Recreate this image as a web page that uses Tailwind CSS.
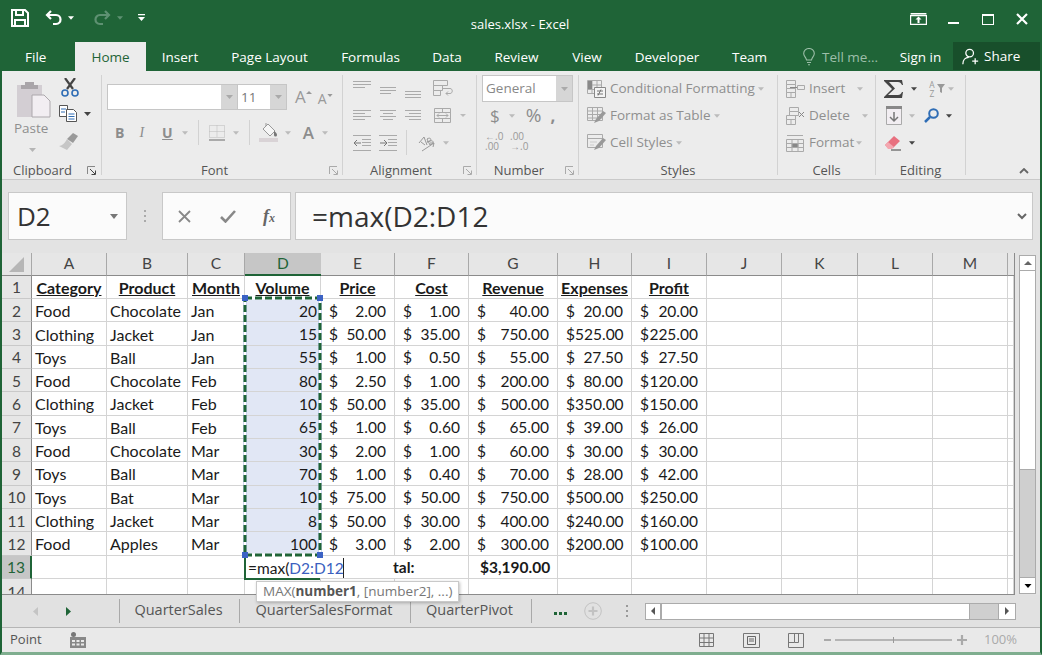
<!DOCTYPE html>
<html lang="en">
<head>
    <meta charset="UTF-8">
    <title>sales.xlsx - Excel</title>
    <script src="https://cdn.jsdelivr.net/npm/@tailwindcss/browser@4"></script>
</head>
<body class="bg-white">

<!-- shared caret -->
<svg class="hidden"><symbol id="caret" viewBox="0 0 7 4"><path d="M0 0h7L3.5 4z" fill="currentColor"/></symbol></svg>

<div class="w-[1042px] h-[655px] flex flex-col overflow-hidden border-x-2 border-x-[#1f6437] border-b-[3px] border-b-[#7fae8f] font-['Open_Sans',sans-serif] text-[13.5px] relative">

    <!-- Title bar -->
    <div class="h-[43px] bg-[#1f6437] text-white grid grid-cols-[1fr_auto_1fr] items-center shrink-0">
        <div class="flex items-center pl-[9px] pb-[7px]">
            <svg width="18" height="18" viewBox="0 0 18 18" fill="none" stroke="#fff" stroke-width="2"><path d="M1 1h13l3 3v13H1z"/><path d="M5 1v5h7V1M4 17v-6h10v6"/></svg>
            <svg class="ml-[16px]" width="18" height="16" viewBox="0 0 18 16" fill="none" stroke="#fff" stroke-width="2.2"><path d="M6 1 2 5l4 4"/><path d="M2 5h9c6 0 6 9 0 9H8"/></svg>
            <svg class="ml-[5px] text-white" width="6" height="4"><use href="#caret"/></svg>
            <svg class="ml-[19px]" width="18" height="16" viewBox="0 0 18 16" fill="none" stroke="#5e9172" stroke-width="2.2"><path d="m12 1 4 4-4 4"/><path d="M16 5H7c-6 0-6 9 0 9h3"/></svg>
            <svg class="ml-[6px] text-[#5e9172]" width="6" height="4"><use href="#caret"/></svg>
            <svg class="ml-[15px]" width="7" height="8" viewBox="0 0 7 8" fill="#fff"><path d="M0 0h7v1.300H0zM0 3h7L3.500 7z"/></svg>
        </div>
        <div class="text-[13px] -translate-x-[1px] translate-y-[3px] font-['Open_Sans',sans-serif]">sales.xlsx - Excel</div>
        <div class="flex items-center justify-end pr-[12px] pb-[5px]">
            <svg width="17" height="12" viewBox="0 0 17 12" fill="none" stroke="#fff" stroke-width="1.200"><path d="M.6 2.600h15.800v8.800H.6z"/><path d="M.6.600h15.800" stroke-width="2"/><path d="M8.500 10V6" stroke-width="2"/><path d="M5.500 6.500h6l-3-3z" fill="#fff" stroke="none"/></svg>
            <div class="ml-[21px] w-[11px] h-[2px] bg-white mt-[8px]"></div>
            <div class="ml-[23px] w-[12px] h-[11px] border border-white border-t-[2px]"></div>
            <svg class="ml-[22px]" width="12" height="12" viewBox="0 0 12 12" stroke="#fff" stroke-width="2.200"><path d="m1 1 10 10M11 1 1 11"/></svg>
        </div>
    </div>

    <!-- Ribbon tabs -->
    <div class="h-[28px] bg-[#1f6437] text-white flex items-stretch shrink-0">
        <div class="w-[73px] pl-[23px] leading-[29px]">File</div>
        <div class="w-[71px] -mt-[1px] text-center bg-[#ececec] text-[#1f6437] leading-[30px]">Home</div>
        <div class="w-[68px] text-center leading-[29px]">Insert</div>
        <div class="w-[111px] text-center leading-[29px]">Page Layout</div>
        <div class="w-[91px] text-center leading-[29px]">Formulas</div>
        <div class="w-[62px] text-center leading-[29px]">Data</div>
        <div class="w-[77px] text-center leading-[29px]">Review</div>
        <div class="w-[64px] text-center leading-[29px]">View</div>
        <div class="w-[96px] text-center leading-[29px]">Developer</div>
        <div class="w-[69px] text-center leading-[29px]">Team</div>
        <div class="ml-[19px] w-[81px] flex items-center text-[#9dbfa9]">
            <svg width="12" height="18" viewBox="0 0 12 18" fill="none" stroke="#9dbfa9" stroke-width="1.100"><path d="M3.500 12C3 9 .7 8.500.7 5.500a5.300 5 0 0 1 10.600 0C11.300 8.500 9 9 8.500 12zM4 14.500h4M5 16.800h2"/></svg>
            <span class="ml-[7px] whitespace-nowrap">Tell me...</span>
        </div>
        <div class="w-[69px] pl-[4px] text-center leading-[29px]">Sign in</div>
        <div class="flex-1 bg-[#184f2b] -mt-[1px] mb-[1px] flex items-center pl-[9px]">
            <svg width="17" height="19" viewBox="0 0 20 20" fill="none" stroke="#fff" stroke-width="1.500"><circle cx="9" cy="6" r="4.500"/><path d="M1 19c0-5 3-8 7-8M12 15.500h7M15.500 12v7"/></svg>
            <span class="ml-[5px]">Share</span>
        </div>
    </div>

    <!-- Ribbon -->
    <div class="h-[109px] bg-[#ececec] border-b border-[#c9c9c9] flex text-[#8f8f8f] shrink-0 relative">
        <!-- Clipboard -->
        <div class="w-[100px] my-[4px] border-r border-[#d2d2d2] flex flex-col">
            <div class="h-[81px] flex">
                <div class="w-[57px] pl-[15px] flex flex-col">
                    <svg class="mt-[5px]" width="34" height="38" viewBox="0 0 34 38"><path d="M0 5h25v32H0z" fill="#d3ced3"/><path d="M8 2h9v3h4v4H4V5h4z" fill="#a9a5a9"/><path d="M15 15h12l6 6v16H15z" fill="#f2eef2" stroke="#aca8ac"/></svg>
                    <div class="mt-[1px] -ml-[3px] leading-[18px]">Paste</div>
                    <svg class="mt-[11px] ml-[12px] text-[#b5b5b5]" width="7" height="4"><use href="#caret"/></svg>
                </div>
                <div class="flex flex-col">
                    <svg class="mt-[3px] ml-[2px]" width="18" height="19" viewBox="0 0 18 19" fill="none"><path d="m4 0 8 11M14 0 6 11" stroke="#444" stroke-width="2.200"/><circle cx="4" cy="15" r="3" stroke="#2f6db5" stroke-width="1.600"/><circle cx="14" cy="15" r="3" stroke="#2f6db5" stroke-width="1.600"/></svg>
                    <div class="mt-[8px] flex items-center">
                        <svg width="19" height="17" viewBox="0 0 19 17" fill="none" stroke="#555"><path d="M.5.500h8v11h-8z" fill="#fff"/><path d="M7.500 4.500h7l3 3v9h-10z" fill="#fff"/><path d="M2 4h5M2 7h4M9.500 9h6M9.500 11.500h6M9.500 14h6" stroke="#2f6db5"/></svg>
                        <svg class="ml-[6px] text-[#444]" width="7" height="4"><use href="#caret"/></svg>
                    </div>
                    <svg class="mt-[11px]" width="20" height="17" viewBox="0 0 20 17"><path d="M8 6 14 0l5 3-5 7z" fill="#9a9a9a"/><path d="M8 6l5 5-5 6-8-4c3 0 6-3 8-7z" fill="#c6c6c6"/></svg>
                </div>
            </div>
            <div class="flex h-[19px] leading-[28px] text-[#555] text-[13px] pl-[11px]">
                <span>Clipboard</span>
                <svg class="ml-[15px] mt-[10px]" width="9" height="9" viewBox="0 0 9 9" fill="none" stroke="#888"><path d="M.5 8V.5H8"/><path d="m3 3 5 5M4.500 8.500h4v-4" stroke="#444"/></svg>
            </div>
        </div>
        <!-- Font -->
        <div class="w-[241px] my-[4px] border-r border-[#d2d2d2] flex flex-col">
            <div class="h-[81px] flex flex-col pl-[5px]">
                <div class="h-[27px] pt-[9px] flex items-start">
                    <div class="w-[131px] h-[26px] bg-white border border-[#c6c6c6] flex justify-end">
                        <div class="w-[16px] bg-[#d6d6d6] flex items-center justify-center"><svg class="text-[#aaa]" width="7" height="4"><use href="#caret"/></svg></div>
                    </div>
                    <div class="w-[49px] h-[26px] bg-white border border-[#c6c6c6] border-l-0 flex justify-between text-[#777] leading-[24px] pl-[3px]">
                        <span>11</span>
                        <div class="w-[16px] bg-[#d6d6d6] flex items-center justify-center"><svg class="text-[#aaa]" width="7" height="4"><use href="#caret"/></svg></div>
                    </div>
                    <span class="ml-[8px] mt-[1px] text-[17px] text-[#999] leading-[24px] relative">A<svg class="inline-block mb-[12px] text-[#999]" width="6" height="3"><path d="M0 3h6L3 0z" fill="currentColor"/></svg></span>
                    <span class="ml-[6px] mt-[4px] text-[14px] text-[#999] leading-[22px]">A<svg class="inline-block mb-[10px] text-[#999]" width="6" height="3"><use href="#caret"/></svg></span>
                </div>
                <div class="h-[27px] mt-[17px] flex items-center text-[#8d8d8d]">
                    <span class="ml-[8px] font-bold text-[14px]">B</span>
                    <span class="ml-[15px] italic text-[14px] font-['Liberation_Serif',serif]">I</span>
                    <span class="ml-[18px] underline font-bold text-[14px] font-['Open_Sans',sans-serif]">U</span>
                    <svg class="ml-[9px] text-[#bbb]" width="6" height="4"><use href="#caret"/></svg>
                    <div class="ml-[10px] w-px h-[25px] bg-[#d2d2d2]"></div>
                    <svg class="ml-[10px]" width="16" height="16" viewBox="0 0 16 16" fill="none" stroke="#bbb" stroke-dasharray="1 1"><path d="M.5.500h15v12H.5zM8 .5v12M.5 6.500h15"/><path d="M0 15h16" stroke="#aaa" stroke-width="2" stroke-dasharray="none"/></svg>
                    <svg class="ml-[8px] text-[#bbb]" width="6" height="4"><use href="#caret"/></svg>
                    <div class="ml-[10px] w-px h-[25px] bg-[#d2d2d2]"></div>
                    <svg class="ml-[9px]" width="19" height="19" viewBox="0 0 19 19" fill="none"><path d="m9 1 7 7-5 5-7-7z" stroke="#999" fill="#f6f6f6"/><path d="M7 3V0" stroke="#999"/><path d="M15 8c2 1 3 3 3 4a1.500 1.500 0 0 1-3 0z" fill="#777"/><path d="M0 15h19v4H0z" fill="#d9d3d6"/></svg>
                    <svg class="ml-[7px] text-[#bbb]" width="6" height="4"><use href="#caret"/></svg>
                    <span class="ml-[12px] text-[17px] text-[#8d8d8d] font-semibold">A</span>
                    <svg class="ml-[8px] text-[#bbb]" width="6" height="4"><use href="#caret"/></svg>
                </div>
            </div>
            <div class="flex h-[19px] leading-[28px] text-[#555] text-[13px]">
                <span class="flex-1 text-center pr-[2px]">Font</span>
                <svg class="mr-[4px] mt-[10px]" width="9" height="9" viewBox="0 0 9 9" fill="none" stroke="#aaa"><path d="M.5 8V.5H8"/><path d="m3 3 5 5M4.500 8.500h4v-4"/></svg>
            </div>
        </div>
        <!-- Alignment -->
        <div class="w-[134px] my-[4px] border-r border-[#d2d2d2] flex flex-col">
            <div class="h-[81px] flex flex-col pl-[10px]">
                <div class="h-[27px] flex items-center">
                    <svg width="103" height="18" viewBox="0 0 103 18" fill="none" stroke="#aaa"><path d="M0 1.500h18M0 4.500h18M0 7.500h12M27 7.500h16M27 10.500h16M27 13.500h11M52 11.500h16M52 14.500h16M52 17.500h16"/><path d="M80.500 .5h14v5h-14zM80.500 5.500h9v5h-9zM80.500 10.500h7v5h-7zM90 8.500h7c3 0 3 5 0 5h-4M95 11.500l-2 2 2 2"/></svg>
                </div>
                <div class="h-[27px] flex items-center">
                    <svg width="118" height="18" viewBox="0 0 118 18" fill="none" stroke="#aaa"><path d="M0 3.500h18M0 6.500h12M0 9.500h18M0 12.500h12M27 3.500h16M30 6.500h10M27 9.500h16M30 12.500h10M52 3.500h16M56 6.500h12M52 9.500h16M56 12.500h12"/><path d="M81.500 1.500h16v14h-16zM81.500 5.500h16M81.500 11.500h16M89.500 1.500v4M89.500 11.500v4M84 8.500h11M86 6.500l-2 2 2 2M93 6.500l2 2-2 2"/><path d="M107 7h6l-3 3z" fill="#bbb" stroke="none"/></svg>
                </div>
                <div class="h-[27px] flex items-center">
                    <svg width="19" height="16" viewBox="0 0 19 16" fill="none" stroke="#aaa"><path d="M0 .5h18M0 15.500h18M9 4.500h9M9 7.500h9M9 10.500h9"/><path d="M8 8H1M4 5 1 8l3 3" stroke="#777"/></svg>
                    <svg class="ml-[7px]" width="19" height="16" viewBox="0 0 19 16" fill="none" stroke="#aaa"><path d="M0 .5h18M0 15.500h18M9 4.500h9M9 7.500h9M9 10.500h9"/><path d="M1 8h7M5 5l3 3-3 3" stroke="#777"/></svg>
                    <div class="ml-[8px] w-px h-[25px] bg-[#d2d2d2]"></div>
                    <svg class="ml-[9px]" width="25" height="18" viewBox="0 0 25 18" fill="none" stroke="#999"><path d="m3 9 5-6 3 8M5 8l4 3M11 5c3-2 5 0 3 2l-3 1 3-1c3-1 4 1 2 3l-2 1zM6 17l12-8M18 9h-4M18 9l-1 4"/></svg>
                    <svg class="ml-[2px] text-[#bbb]" width="6" height="4"><use href="#caret"/></svg>
                </div>
            </div>
            <div class="flex h-[19px] leading-[28px] text-[#555] text-[13px]">
                <span class="flex-1 text-center pr-[4px]">Alignment</span>
                <svg class="mr-[4px] mt-[10px]" width="9" height="9" viewBox="0 0 9 9" fill="none" stroke="#aaa"><path d="M.5 8V.5H8"/><path d="m3 3 5 5M4.500 8.500h4v-4"/></svg>
            </div>
        </div>
        <!-- Number -->
        <div class="w-[102px] my-[4px] border-r border-[#d2d2d2] flex flex-col">
            <div class="h-[81px] flex flex-col pl-[5px]">
                <div class="h-[27px] flex items-start">
                    <div class="w-[91px] h-[27px] bg-white border border-[#c6c6c6] flex justify-between pl-[3px] leading-[25px] text-[#888]">
                        <span>General</span>
                        <div class="w-[16px] bg-[#d6d6d6] flex items-center justify-center"><svg class="text-[#aaa]" width="7" height="4"><use href="#caret"/></svg></div>
                    </div>
                </div>
                <div class="h-[27px] flex items-center text-[#8d8d8d]">
                    <span class="ml-[8px] text-[17px]">$</span>
                    <svg class="ml-[9px] text-[#bbb]" width="6" height="4"><use href="#caret"/></svg>
                    <span class="ml-[11px] text-[19px]">%</span>
                    <span class="ml-[9px] text-[17px] font-bold leading-[14px]">,</span>
                </div>
                <div class="h-[23px] flex items-center text-[10px] leading-[10px] text-[#999]">
                    <div class="ml-[3px] w-[19px]"><div>←.0</div><div>.00</div></div>
                    <div class="ml-[6px] w-[19px]"><div>.00</div><div>→.0</div></div>
                </div>
                <div class="h-[4px]"></div>
            </div>
            <div class="flex h-[19px] leading-[28px] text-[#555] text-[13px]">
                <span class="flex-1 text-center pr-[4px]">Number</span>
                <svg class="mr-[4px] mt-[10px]" width="9" height="9" viewBox="0 0 9 9" fill="none" stroke="#aaa"><path d="M.5 8V.5H8"/><path d="m3 3 5 5M4.500 8.500h4v-4"/></svg>
            </div>
        </div>
        <!-- Styles -->
        <div class="w-[199px] my-[4px] border-r border-[#d2d2d2] flex flex-col">
            <div class="h-[81px] flex flex-col pl-[8px]">
                <div class="h-[27px] flex items-center">
                    <svg width="19" height="18" viewBox="0 0 19 18" fill="none"><path d="M.5.500h14v13H.5zM.5 5h14M.5 9.500h14M5 .5v13M10 .5v13" stroke="#aaa"/><path d="M1 1h4v4H1zM1 5h4v4H1z" fill="#888"/><path d="M7.500 7.500h11v10h-11z" fill="#f4f4f4" stroke="#888"/><path d="M10 11h6M10 14h6M14 9.500l-3 6" stroke="#777"/></svg>
                    <span class="ml-[4px] whitespace-nowrap">Conditional Formatting</span>
                    <svg class="ml-[3px] text-[#bbb]" width="6" height="4"><use href="#caret"/></svg>
                </div>
                <div class="h-[27px] flex items-center">
                    <svg width="19" height="17" viewBox="0 0 19 17" fill="none"><path d="M.5.500h15v13H.5zM.5 4h15M.5 7.500h15M.5 11h15M5.500.5v13M10.500.5v13" stroke="#aaa"/><path d="M7 16l2-4 7-8 3 2-7 8z" fill="#999"/></svg>
                    <span class="ml-[4px] whitespace-nowrap">Format as Table</span>
                    <svg class="ml-[3px] text-[#bbb]" width="6" height="4"><use href="#caret"/></svg>
                </div>
                <div class="h-[27px] flex items-center">
                    <svg width="19" height="17" viewBox="0 0 19 17" fill="none"><path d="M.5.500h15v13H.5zM.5 4.500h15" stroke="#aaa"/><path d="M3 8h7M3 11h4" stroke="#ccc"/><path d="M7 16l2-4 7-8 3 2-7 8z" fill="#999"/></svg>
                    <span class="ml-[4px] whitespace-nowrap">Cell Styles</span>
                    <svg class="ml-[3px] text-[#bbb]" width="6" height="4"><use href="#caret"/></svg>
                </div>
            </div>
            <div class="h-[19px] leading-[28px] text-[#555] text-[13px] text-center">Styles</div>
        </div>
        <!-- Cells -->
        <div class="w-[98px] my-[4px] border-r border-[#d2d2d2] flex flex-col">
            <div class="h-[81px] flex flex-col pl-[8px]">
                <div class="h-[27px] flex items-center">
                    <svg width="19" height="18" viewBox="0 0 19 18" fill="none" stroke="#aaa"><path d="M.5.500h9v4h-9zM.5 4.500h9v4h-9zM.5 8.500h9v4h-9zM.5 12.500h9v5h-9zM5 12.500v5M11.500 5.500h7v4h-7z"/><path d="M11 7.500H4" stroke="#888"/></svg>
                    <span class="ml-[4px] w-[48px]">Insert</span>
                    <svg class="text-[#bbb]" width="6" height="4"><use href="#caret"/></svg>
                </div>
                <div class="h-[27px] flex items-center">
                    <svg width="19" height="18" viewBox="0 0 19 18" fill="none" stroke="#aaa"><path d="M3.500.5h9v4h-9zM3.500 4.500h9v4h-9zM.5 8.500h9v4h-9zM.5 12.500h9v5h-9zM5 12.500v5"/><path d="m13 5 5 5M18 5l-5 5" stroke="#888"/></svg>
                    <span class="ml-[4px] w-[53px]">Delete</span>
                    <svg class="text-[#bbb]" width="6" height="4"><use href="#caret"/></svg>
                </div>
                <div class="h-[27px] flex items-center">
                    <svg width="19" height="18" viewBox="0 0 19 18" fill="none" stroke="#aaa"><path d="M.5 5.500h17v12H.5zM.5 9.500h17M.5 13.500h17M6 5.500v12M12 5.500v12M1 1.500h16"/><path d="M6 9.500h6v4H6z" fill="#888"/></svg>
                    <span class="ml-[4px] w-[47px]">Format</span>
                    <svg class="text-[#bbb]" width="6" height="4"><use href="#caret"/></svg>
                </div>
            </div>
            <div class="h-[19px] leading-[28px] text-[#555] text-[13px] text-center">Cells</div>
        </div>
        <!-- Editing -->
        <div class="w-[90px] my-[4px] border-r border-[#d2d2d2] flex flex-col">
            <div class="h-[81px] flex flex-col pl-[8px]">
                <div class="h-[27px] flex items-center">
                    <svg width="19" height="18" viewBox="0 0 19 18"><path d="M0 0h18l1 5h-1c-1-2-2-3-4-3H5l6 6.500L4 15h10c2 0 3-1 4-3h1l-1 6H0v-1l8-8L0 1z" fill="#444"/></svg>
                    <svg class="ml-[8px] text-[#444]" width="6" height="4"><use href="#caret"/></svg>
                    <div class="ml-[10px] text-[8.500px] leading-[9px] text-[#999] w-[10px] text-center"><div>A</div><div>Z</div></div>
                    <svg width="8" height="9" viewBox="0 0 8 9" fill="#999"><path d="M0 0h8L5 4v5L3 8V4z"/></svg>
                    <svg class="ml-[3px] text-[#bbb]" width="6" height="4"><use href="#caret"/></svg>
                </div>
                <div class="h-[27px] flex items-center">
                    <svg class="ml-[2px]" width="16" height="19" viewBox="0 0 16 19" fill="none"><path d="M.5.500h15v18H.5z" fill="#f2eef2" stroke="#aaa"/><path d="M0 0h16v3H0z" fill="#888"/><path d="M8 6v9M4 11l4 4 4-4" stroke="#777" stroke-width="1.500"/></svg>
                    <svg class="ml-[7px] text-[#bbb]" width="6" height="4"><use href="#caret"/></svg>
                    <svg class="ml-[9px]" width="15" height="15" viewBox="0 0 15 15" fill="none"><circle cx="9.500" cy="5.500" r="4.300" stroke="#2f6db5" stroke-width="2"/><path d="M6 9l-5 5" stroke="#2f6db5" stroke-width="2.500"/></svg>
                    <svg class="ml-[7px] text-[#444]" width="6" height="4"><use href="#caret"/></svg>
                </div>
                <div class="h-[27px] flex items-center">
                    <svg class="ml-[1px]" width="17" height="16" viewBox="0 0 17 16"><path d="m0 10 9-9 6 5-7 7H3z" fill="#e8707f"/><path d="m0 10 3-3 6 5-2 2H3z" fill="#f4a7b0"/><path d="M6 15h10" stroke="#666" stroke-width="1.300"/></svg>
                    <svg class="ml-[7px] text-[#444]" width="6" height="4"><use href="#caret"/></svg>
                </div>
            </div>
            <div class="h-[19px] leading-[28px] text-[#555] text-[13px] text-center">Editing</div>
        </div>
        <div class="flex-1 flex justify-end items-end pb-[5px] pr-[11px]">
            <svg width="10" height="6" viewBox="0 0 10 6" fill="none" stroke="#666" stroke-width="1.800"><path d="m1 5 4-4 4 4"/></svg>
        </div>
    </div>

    <!-- Formula bar -->
    <div class="h-[73px] bg-[#e3e3e3] flex pt-[12px] pl-[6px] shrink-0">
        <div class="w-[119px] h-[48px] bg-[#fbfbfb] border border-[#c8c8c8] flex items-center pl-[8px] pr-[8px] justify-between text-[26px] text-[#333]">
            <span>D2</span>
            <svg class="text-[#777]" width="8" height="5"><path d="M0 0h8L4 5z" fill="currentColor"/></svg>
        </div>
        <div class="w-[35px] h-[48px] flex flex-col items-center justify-center gap-[3px]">
            <div class="w-[2px] h-[2px] bg-[#aaa]"></div><div class="w-[2px] h-[2px] bg-[#aaa]"></div><div class="w-[2px] h-[2px] bg-[#aaa]"></div>
        </div>
        <div class="w-[129px] h-[48px] bg-[#fbfbfb] border border-[#c8c8c8] flex items-center pl-[15px]">
            <svg width="13" height="13" viewBox="0 0 13 13" stroke="#888" stroke-width="1.800"><path d="m1 1 11 11M12 1 1 12"/></svg>
            <svg class="ml-[29px]" width="16" height="13" viewBox="0 0 16 13" fill="none" stroke="#888" stroke-width="2.600"><path d="m1 7 4.500 4.500L15 1"/></svg>
            <span class="ml-[27px] italic text-[18px] font-bold text-[#666] font-['Liberation_Serif',serif]">f<span class="text-[12px]">x</span></span>
        </div>
        <div class="ml-[4px] w-[738px] h-[48px] bg-[#fbfbfb] border border-[#c8c8c8] flex items-center pl-[16px] pr-[5px] justify-between text-[28px] text-[#333]">
            <span>=max(D2:D12</span>
            <svg width="10" height="7" viewBox="0 0 10 7" fill="none" stroke="#666" stroke-width="2"><path d="m1 1 4 4 4-4"/></svg>
        </div>
        <div class="flex-1"></div>
    </div>

    <!-- Sheet area -->
    <div class="h-[342px] flex shrink-0 bg-[#e3e3e3] relative">
        <div id="sheet" class="relative w-[1012px] h-[342px] overflow-hidden bg-white border-b border-[#8b8b8b] grid grid-cols-[30px_75px_81px_57px_76px_74px_74px_89px_74px_75px_75px_76px_75px_75px_6px] grid-rows-[23px_23px_repeat(13,23.33px)] font-['Lato',sans-serif] text-[15.5px] text-[#1a1a1a]"></div>
        <div class="w-[26px] flex flex-col items-end pr-[4px] pt-[2px] border-l border-[#8b8b8b]">
            <div class="w-[17px] h-[339px] flex flex-col bg-[#cfcfcf] border-x border-[#ababab]">
                <div class="h-[16px] bg-white border-y border-[#ababab] flex items-center justify-center"><svg width="8" height="4"><path d="M0 4h8L4 0z" fill="#666"/></svg></div>
                <div class="h-[199px] bg-white border-b border-[#ababab]"></div>
                <div class="flex-1"></div>
                <div class="h-[17px] bg-white border border-[#ababab] -mx-px flex items-center justify-center"><svg width="8" height="4"><use href="#caret"/></svg></div>
            </div>
        </div>
        <!-- Function tooltip -->
        <div class="absolute left-[254px] top-[328px] z-10 h-[21px] bg-white border border-[#c9c9c9] shadow-[1px_1px_3px_rgba(0,0,0,0.25)] px-[6px] leading-[18px] text-[13.5px] text-[#777] whitespace-nowrap">MAX(<b class="text-[#555]">number1</b>, [number2], ...)</div>
    </div>

    <!-- Sheet tabs -->
    <div class="h-[33px] bg-[#e1e1e1] border-b border-[#b5b5b5] flex items-center text-[14.5px] text-[#555] shrink-0">
        <svg class="ml-[31px]" width="5" height="9"><path d="M5 0v9L0 4.500z" fill="#c4c4c4"/></svg>
        <svg class="ml-[28px]" width="5" height="9"><path d="M0 0v9l5-4.500z" fill="#1f6437"/></svg>
        <div class="ml-[48px] w-[121px] h-[24px] border-x border-[#a9a9a9] text-center leading-[22px] pr-[2px]">QuarterSales</div>
        <div class="w-[171px] h-[24px] border-r border-[#a9a9a9] text-center leading-[22px] pr-[2px]">QuarterSalesFormat</div>
        <div class="w-[121px] h-[24px] border-r border-[#a9a9a9] text-center leading-[22px] pr-[3px]">QuarterPivot</div>
        <div class="ml-[22px] mt-[4px] flex gap-[2px]"><div class="w-[3px] h-[3px] bg-[#1f6437]"></div><div class="w-[3px] h-[3px] bg-[#1f6437]"></div><div class="w-[3px] h-[3px] bg-[#1f6437]"></div></div>
        <svg class="ml-[17px]" width="18" height="18" viewBox="0 0 18 18" fill="none" stroke="#c2c2c2"><circle cx="9" cy="9" r="8.300"/><path d="M9 4.500v9M4.500 9h9" stroke-width="2.200"/></svg>
        <div class="ml-[24px] flex flex-col gap-[3px]"><div class="w-[2px] h-[2px] bg-[#999]"></div><div class="w-[2px] h-[2px] bg-[#999]"></div><div class="w-[2px] h-[2px] bg-[#999]"></div></div>
        <div class="ml-[17px] w-[371px] h-[17px] bg-[#cfcfcf] flex border border-[#ababab]">
            <div class="w-[16px] bg-white border-r-2 border-[#ababab] flex items-center justify-center"><svg width="4" height="8"><path d="M4 0v8L0 4z" fill="#555"/></svg></div>
            <div class="w-[308px] bg-white border-r border-[#ababab]"></div>
            <div class="flex-1"></div>
            <div class="w-[17px] bg-white border-l border-[#ababab] flex items-center justify-center"><svg width="4" height="8"><path d="M0 0v8l4-4z" fill="#555"/></svg></div>
        </div>
    </div>

    <!-- Status bar -->
    <div class="flex-1 bg-[#e9e9e9] flex items-center text-[13px] text-[#555]">
        <span class="ml-[8px] w-[60px]">Point</span>
        <svg width="16" height="16" viewBox="0 0 16 16"><path d="M0 5h16v11H0z" fill="#888"/><path d="M2 8h3v2H2zM6.500 8h3v2h-3zM11 8h3v2h-3zM2 11.500h3v2H2zM6.500 11.500h3v2h-3zM11 11.500h3v2h-3z" fill="#e9e9e9"/><circle cx="3.500" cy="2.500" r="2.500" fill="#777"/></svg>
        <svg class="ml-[613px]" width="15" height="14" viewBox="0 0 15 14" fill="none" stroke="#777"><path d="M.5.500h14v13H.5zM.5 5h14M.5 9.500h14M5 .5v13M10 .5v13"/></svg>
        <svg class="ml-[29px]" width="17" height="15" viewBox="0 0 17 15" fill="none" stroke="#777"><path d="M.5.500h16v14H.5z"/><path d="M4.500 3.500h8v8h-8zM6 6h5M6 8h5" stroke="#666"/></svg>
        <svg class="ml-[28px]" width="16" height="15" viewBox="0 0 16 15" fill="none" stroke="#777"><path d="M.5.500h15v14H.5zM.5 9.500h6v-9M6.500 9.500h4v-9"/></svg>
        <div class="ml-[20px] w-[7px] h-[2px] bg-[#aaa]"></div>
        <div class="ml-[4px] w-[117px] h-[2px] bg-[#b5b5b5] flex justify-center items-center"><div class="w-px h-[6px] bg-[#999]"></div></div>
        <svg class="ml-[5px]" width="10" height="10" viewBox="0 0 10 10" stroke="#aaa" stroke-width="2.200"><path d="M5 0v10M0 5h10"/></svg>
        <span class="ml-[17px] text-[#aaa]">100%</span>
    </div>
</div>

<script>
    // Sheet contents
    const letters = ['A','B','C','D','E','F','G','H','I','J','K','L','M'];
    const titles = ['Category','Product','Month','Volume','Price','Cost','Revenue','Expenses','Profit'];
    const rows = [
        ['Food','Chocolate','Jan','20','2.00','1.00','40.00','20.00','20.00'],
        ['Clothing','Jacket','Jan','15','50.00','35.00','750.00','525.00','225.00'],
        ['Toys','Ball','Jan','55','1.00','0.50','55.00','27.50','27.50'],
        ['Food','Chocolate','Feb','80','2.50','1.00','200.00','80.00','120.00'],
        ['Clothing','Jacket','Feb','10','50.00','35.00','500.00','350.00','150.00'],
        ['Toys','Ball','Feb','65','1.00','0.60','65.00','39.00','26.00'],
        ['Food','Chocolate','Mar','30','2.00','1.00','60.00','30.00','30.00'],
        ['Toys','Ball','Mar','70','1.00','0.40','70.00','28.00','42.00'],
        ['Toys','Bat','Mar','10','75.00','50.00','750.00','500.00','250.00'],
        ['Clothing','Jacket','Mar','8','50.00','30.00','400.00','240.00','160.00'],
        ['Food','Apples','Mar','100','3.00','2.00','300.00','200.00','100.00']
    ];

    const line = 'border-r border-b border-[#d4d4d4] pt-[2px]';
    const head = 'flex items-center justify-center bg-[#e6e6e6] border-r border-b border-r-[#a8a8a8] border-b-[#8b8b8b] text-[#444]';
    const rowHead = 'flex items-center justify-center bg-[#e6e6e6] border-r border-b border-r-[#8b8b8b] border-b-[#c9c9c9] text-[#444] pt-[2px]';
    const empty = (n) => `<div class="${line}"></div>`.repeat(n);

    let html = `<div class="${head} relative"><svg width="15" height="15"><path d="M15 0v15H0z" fill="#b6b6b6"/></svg></div>`;
    letters.forEach(l => {
        html += l === 'D'
            ? `<div class="flex items-center justify-center bg-[#c6c6c6] border-b-2 border-b-[#1f6437] text-[#1f6437]">${l}</div>`
            : `<div class="${head}">${l}</div>`;
    });
    html += `<div class="bg-[#e6e6e6] border-b border-b-[#8b8b8b]"></div>`;

    // Row 1: titles
    html += `<div class="${rowHead}">1</div>`;
    titles.forEach(t => { html += `<div class="${line} flex items-center justify-center font-bold underline text-[16px] whitespace-nowrap overflow-hidden">${t}</div>`; });
    html += empty(5);

    // Rows 2-12
    rows.forEach((r, i) => {
        html += `<div class="${rowHead}">${i + 2}</div>`;
        r.slice(0, 3).forEach(t => { html += `<div class="${line} flex items-center pl-[3px] text-[16px] whitespace-nowrap overflow-hidden">${t}</div>`; });
        html += `<div class="${line} bg-[#e1e7f5] flex items-center justify-end pr-[3px]">${r[3]}</div>`;
        r.slice(4).forEach(t => { html += `<div class="${line} flex items-center justify-between px-[8px]"><span>$</span><span>${t}</span></div>`; });
        html += empty(5);
    });

    // Row 13: the cell being edited runs over into E and F
    html += `<div class="flex items-center justify-center bg-[#c6c6c6] border-r-2 border-r-[#1f6437] border-b border-b-[#c9c9c9] text-[#1f6437] pt-[2px]">13</div>`;
    html += empty(3);
    html += `<div class="col-span-3 ${line} flex items-center pl-[3px] whitespace-nowrap"><span class="w-[96px] border-r border-[#222] leading-[20px]">=max(<span class="text-[#3b5fc0]">D2:D12</span></span><span class="ml-[49px] font-bold">tal:</span></div>`;
    html += `<div class="${line} flex items-center justify-between pl-[11px] pr-[8px] font-bold"><span>$</span><span>3,190.00</span></div>`;
    html += empty(7);

    // Row 14, cut off by the sheet's lower edge
    html += `<div class="${rowHead} items-start">14</div>`;
    html += empty(14);

    // Marquee round D2:D12 and the edit cell's border
    html += `<svg class="absolute left-0 top-0 pointer-events-none" width="1012" height="341" fill="none">
        <path d="M243 45V302M318 45V302" stroke="#3b62c4" stroke-width="3"/>
        <path d="M243 45H318V302H243Z" stroke="#fff" stroke-width="3"/>
        <path d="M243 45H318V302H243Z" stroke="#1f6437" stroke-width="3" stroke-dasharray="7 3"/>
        <path d="M243 303V326H318" stroke="#1f6437" stroke-width="2"/>
        <path d="M240 42h6v6h-6zM315 42h6v6h-6zM240 299h6v6h-6zM315 299h6v6h-6z" fill="#3b62c4"/>
    </svg>`;

    document.getElementById('sheet').innerHTML = html;
</script>
</body>
</html>
